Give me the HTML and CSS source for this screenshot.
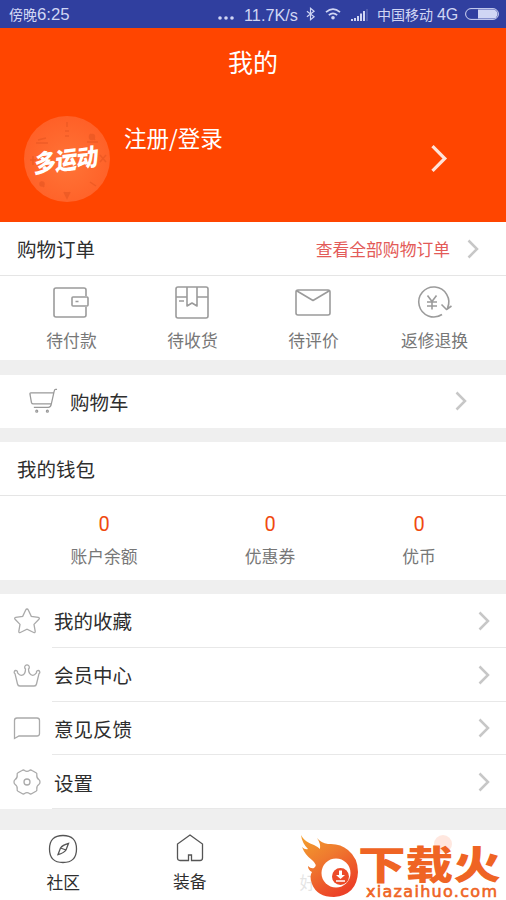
FILE: index.html
```html
<!DOCTYPE html>
<html lang="zh-CN">
<head>
<meta charset="utf-8">
<title>我的</title>
<link rel="stylesheet" href="styles.css">
</head>
<body>
<svg class="defs" width="0" height="0">
  <symbol id="chevron" viewBox="0 0 12 20"><path d="M1.5 1.5 10 10 1.5 18.5"/></symbol>
</svg>

<div class="status">
  <span class="time">傍晚<span class="latin">6:25</span></span>
  <svg class="dots" viewBox="0 0 16 4"><circle cx="2" cy="2" r="1.8"/><circle cx="8" cy="2" r="1.8"/><circle cx="14" cy="2" r="1.8"/></svg>
  <span class="speed">11.7K/s</span>
  <svg class="bt" viewBox="0 0 10 14"><path d="M1 4l8 6-4 3.3V.7L9 4l-8 6"/></svg>
  <svg class="wifi" viewBox="0 0 14 12"><path d="M0 4.200Q7-2 14 4.200M2.800 7.200q4.200-3.600 8.400 0"/><circle cx="7" cy="9.800" r="1.800"/></svg>
  <svg class="signal" viewBox="0 0 17 12"><path d="M1 12v-2M4 12V9M7 12V7M10 12V4.500M13 12V2"/><path class="dim" d="M16 12V0"/></svg>
  <span class="carrier">中国移动 <span class="latin">4G</span></span>
  <svg class="battery" viewBox="0 0 34 12"><rect class="shell" x=".6" y=".6" width="32.800" height="10.800" rx="5.400"/><path d="M13 1.500h15a4.500 4.500 0 0 1 0 9H13z"/></svg>
</div>

<header class="hero">
  <h1>我的</h1>
  <div class="profile">
    <div class="avatar">
      <svg viewBox="0 0 86 86">
        <g class="motif">
          <path d="M14 24l8-2M12 27h12M66 18l5 6m-8 2h11M43 6v5m-2 4h4m-4 5h4M6 44h6m-3-4v9M76 39l6 7m-6 0 6-7M17 66l3 5m46-5 6 4M40 76l3 6 3-6"/>
          <circle cx="18" cy="68" r="2"/><circle cx="68" cy="21" r="2.500"/>
        </g>
      </svg>
      <span>多运动</span>
    </div>
    <span class="login">注册/登录</span>
    <svg class="chev big"><use href="#chevron"/></svg>
  </div>
</header>

<section class="panel orders">
  <div class="title"><h2>购物订单</h2><span class="all">查看全部购物订单</span><svg class="chev"><use href="#chevron"/></svg></div>
  <div class="grid">
    <div class="cell"><svg viewBox="0 0 36 34"><path d="M33 11V5q0-2-2-2H3Q1 3 1 5v25q0 2 2 2h28q2 0 2-2v-8M20 12h14q1 0 1 1v7q0 1-1 1H20q-1 0-1-1v-7q0-1 1-1zM22.500 16.500h3"/></svg><span>待付款</span></div>
    <div class="cell"><svg viewBox="0 0 36 34"><path d="M4 2h28q2 0 2 2v27q0 2-2 2H4q-2 0-2-2V4q0-2 2-2zM2 12h11m10 0h11M13 2v19l5-3 5 3V2M5 16h5"/></svg><span>待收货</span></div>
    <div class="cell"><svg viewBox="0 0 36 34"><path d="M3 5h30q2 0 2 2v21q0 2-2 2H3q-2 0-2-2V7q0-2 2-2zM2 6l16 9.500L34 6"/></svg><span>待评价</span></div>
    <div class="cell"><svg viewBox="0 0 36 34"><path d="M26 29.500A15 15 0 1 1 31.500 23M25.500 19.500l5 5 5-3.500M11.500 10.500l4.500 6 4.500-6M11 17h10M11 21h10M16 17v7.500"/></svg><span>返修退换</span></div>
  </div>
</section>

<section class="panel cart">
  <svg class="cart-icon" viewBox="0 0 30 26"><path d="M29 1h-1.500q-1 0-1.500 2l-3 13.500q-.5 3-3 3H5M25.500 4.500H2Q.8 4.500 1 6l1.500 8.500Q3 16 4.500 16H23"/><circle cx="8" cy="23.500" r="1"/><circle cx="19" cy="23.500" r="1"/></svg>
  <h2>购物车</h2>
  <svg class="chev"><use href="#chevron"/></svg>
</section>

<section class="panel wallet">
  <div class="title"><h2>我的钱包</h2></div>
  <div class="balances">
    <div><b>0</b><span>账户余额</span></div>
    <div><b>0</b><span>优惠券</span></div>
    <div><b>0</b><span>优币</span></div>
  </div>
</section>

<section class="panel menu">
  <div class="row"><svg class="icon" viewBox="0 0 28 28"><path d="M14 2q.8 0 1.300 1l3 6.300 7 1.100q1.800.4.600 1.900l-4.900 5.100 1.200 7q.1 1.800-1.500 1.100L14 22.200l-6.700 3.300q-1.600.7-1.500-1.100l1.200-7-4.900-5.100q-1.200-1.500.6-1.900l7-1.100 3-6.300q.5-1 1.300-1z"/></svg><h2>我的收藏</h2><svg class="chev"><use href="#chevron"/></svg></div>
  <div class="row"><svg class="icon" viewBox="0 0 28 28"><path d="M12.500 8a2.300 2.300 0 1 1 3 0c0 3.500 1.500 6.300 4.300 6.300 2 0 2.700-1.300 3.700-2.600a1.700 1.700 0 1 1 2.500 1L23.500 23q-.4 2-2.300 2H6.800q-1.900 0-2.300-2L2 12.700a1.700 1.700 0 1 1 2.500-1c1 1.300 1.700 2.600 3.700 2.600 2.800 0 4.300-2.800 4.300-6.300z"/></svg><h2>会员中心</h2><svg class="chev"><use href="#chevron"/></svg></div>
  <div class="row"><svg class="icon" viewBox="0 0 28 28"><path d="M4 4h20q2.500 0 2.500 2.500v13Q26.500 22 24 22H6l-4.500 2.500v-18Q1.500 4 4 4z"/></svg><h2>意见反馈</h2><svg class="chev"><use href="#chevron"/></svg></div>
  <div class="row"><svg class="icon" viewBox="0 0 28 28"><path d="M9 2.500q1.500-1 2.500 0 2.500 1.600 5 0 1-1 2.500 0l4 2.300q1.300.8.800 2.200-.3 3 2 4.500 1.200.8 1.200 2.500t-1.200 2.500q-2.300 1.500-2 4.500.5 1.400-.8 2.200l-4 2.300q-1.500 1-2.500 0-2.500-1.600-5 0-1 1-2.500 0l-4-2.300q-1.300-.8-.8-2.200.3-3-2-4.500Q1 15.700 1 14t1.200-2.500q2.300-1.500 2-4.500-.5-1.400.8-2.200z"/><circle cx="14" cy="14" r="3"/></svg><h2>设置</h2><svg class="chev"><use href="#chevron"/></svg></div>
</section>

<nav class="tabs">
  <div class="tab"><svg viewBox="0 0 30 30"><path d="M15 1.500c9 0 13.500 4.500 13.500 13.500S24 28.500 15 28.500 1.500 24 1.500 15 6 1.500 15 1.500zM20.500 9.500q-6 1.500-8 4.500l-2.500 6.500q6-1.500 8-4.500zM12.500 14l5.500 2"/></svg><span>社区</span></div>
  <div class="tab home"><svg viewBox="0 0 30 30"><path d="M15 2 27.500 11v14q0 2.500-2.500 2.500h-8.500V22h-3v5.500H5q-2.500 0-2.500-2.500V11z"/></svg><span>装备</span></div>
  <div class="tab faded"><svg></svg><span>好友</span></div>
  <div class="tab faded person"><svg viewBox="0 0 30 30"><circle cx="15" cy="10" r="9"/></svg></div>
  <div class="watermark">
    <svg class="flame" viewBox="0 0 60 64">
      <defs><linearGradient id="fire" x1="0" y1="0" x2=".6" y2="1"><stop offset="0" stop-color="#f3a02c"/><stop offset=".45" stop-color="#ef7a2f"/><stop offset="1" stop-color="#ec4127"/></linearGradient></defs>
      <path class="burn" d="M1 1C4 7 9 9 14 11q4 2 6 4 1-5-3-11 4 5 11 6 12-1 20 6 10 8 10 22-1 23-24 25Q17 63 12 50q-3-8 0-12-4-2-4-6 3 3 6 2 4-3-2-8Q5 21 2 13q3 3 6 2Q2 9 1 1z"/>
      <circle class="hole" cx="36" cy="39" r="14.500"/>
      <circle class="badge" cx="40.500" cy="42.500" r="8.500"/>
      <path class="hole" d="M39 36.500h3V41h3l-4.500 4-4.500-4h3zM36 46.200h9v1.600h-9z"/>
    </svg>
    <span class="brand">下载火</span>
    <span class="domain">xiazaihuo.com</span>
  </div>
</nav>
</body>
</html>
```
FILE: styles.css
```css
* { box-sizing: border-box; }
body { margin: 0; width: 506px; height: 900px; overflow: hidden; background: #efefef; color: #2e2e2e; font-family: "Noto Sans CJK SC", sans-serif; font-size: 16.800px; }
h1, h2 { margin: 0; font-weight: 400; }
svg { display: block; flex: none; fill: none; overflow: visible; }
.defs { position: absolute; }

.status { height: 28px; padding: 0 7px 0 9px; background: #303f9f; color: #d0d6f4; display: flex; align-items: center; font: 400 14px/28px "Liberation Sans", "Noto Sans CJK SC", sans-serif; white-space: nowrap; }
.time .latin { font-size: 16.800px; }
.carrier .latin { font-size: 16px; }
.time, .carrier, .speed { padding-top: 1px; }
.status svg { fill: #d0d6f4; }
.dots { width: 16px; height: 4px; margin: 8px 10px 0 auto; }
.speed { width: 54px; font-size: 16.300px; }
.status .bt { width: 9px; height: 14px; margin-left: 8px; fill: none; stroke: #d0d6f4; stroke-width: 1.300; }
.wifi { width: 14px; height: 12px; margin-left: 11px; }
.wifi path { fill: none; stroke: #d0d6f4; stroke-width: 1.700; }
.signal { width: 17px; height: 12px; margin: 2px 0 0 11px; stroke: #d0d6f4; stroke-width: 2; }
.signal .dim { stroke: #4f5db0; }
.carrier { width: 82px; margin-left: 9px; }
.battery { width: 34px; height: 12px; margin-left: 6px; }
.battery .shell { fill: none; stroke: #d0d6f4; }

.hero { height: 194px; background: #ff4500; color: #fff; }
.hero h1 { height: 70px; line-height: 67px; text-align: center; font-size: 25px; }
.profile { display: flex; height: 124px; padding: 18px 58px 0 24px; }
.avatar { position: relative; width: 86px; height: 86px; border-radius: 50%; background: radial-gradient(circle at 50% 55%, #ff7437, #ff6128 70%, #ff5b20); }
.avatar svg { width: 86px; height: 86px; }
.motif { stroke: #d94d1c; fill: #d94d1c; stroke-width: 1.500; opacity: .4; }
.avatar span { position: absolute; left: 10px; top: 25px; font-size: 22px; font-weight: 900; line-height: 34px; letter-spacing: -.5px; white-space: nowrap; transform: rotate(-7deg) skewX(-10deg) scaleY(1.100); }
.login { margin-left: 14px; font-size: 22.500px; line-height: 42px; }
.chev { width: 12px; height: 20px; margin-left: auto; stroke: #c7c7c7; stroke-width: 2.500; }
.chev.big { width: 18px; height: 29px; margin-top: 28px; stroke: #ffe3d8; stroke-width: 2.200; }

.panel { background: #fff; }
.panel h2 { font-size: 19.500px; }
.title { height: 54px; border-bottom: 1px solid #e5e5e5; padding: 0 27px 0 17px; display: flex; align-items: center; }
.orders { height: 138px; }
.all { margin-left: auto; color: #e35b58; }
.title .chev { margin-left: 17px; }
.grid { display: grid; grid-template-columns: repeat(4, 121px); padding: 9px 0 0 11px; }
.cell { display: flex; flex-direction: column; align-items: center; }
.cell svg { width: 36px; height: 34px; margin-left: -1px; stroke: #9b9b9b; stroke-width: 1.600; stroke-linejoin: round; }
.cell span { margin-top: 9px; line-height: 24px; color: #777; }

.cart { margin-top: 15px; height: 53px; padding: 0 39px 1px 29px; display: flex; align-items: center; }
.cart-icon { width: 29px; height: 26px; margin-right: 12px; stroke: #999; stroke-width: 1.300; }

.wallet { margin-top: 14px; height: 138px; }
.balances { display: grid; grid-template-columns: 208px 124px 174px; text-align: center; padding-top: 14px; }
.balances b { display: block; color: #f04a10; font: 400 20px/28px Roboto, sans-serif; }
.balances span { display: block; line-height: 36px; color: #777; }

.menu { margin-top: 14px; height: 215px; }
.row { height: 53.750px; display: flex; align-items: center; padding: 0 16px 0 13px; background: linear-gradient(#e8e8e8, #e8e8e8) 52px 100% / 100% 1px no-repeat; }
.icon { width: 28px; height: 28px; margin-right: 13px; stroke: #aaa; stroke-width: 1.300; }

.tabs { position: relative; margin-top: 21px; height: 70px; background: #fff; display: grid; grid-template-columns: repeat(4, 126.500px); }
.tab { display: flex; flex-direction: column; align-items: center; padding-top: 4px; }
.tab svg { width: 30px; height: 30px; stroke: #555; stroke-width: 1.300; }
.tab span { margin-top: 6px; line-height: 24px; }
.tab.home { padding-top: 3px; }
.faded { opacity: .12; }
.faded.person svg { fill: #ff4500; stroke: none; }
.watermark { position: absolute; left: 300px; top: 4px; width: 206px; height: 66px; color: #ef6424; }
.flame { width: 60px; height: 64px; }
.burn { fill: url(#fire); }
.badge { fill: #ec4a28; }
.hole { fill: #fff; }
.brand { position: absolute; left: 58px; top: 8px; font-size: 39px; line-height: 40px; font-weight: 900; white-space: nowrap; transform: scaleX(1.220); transform-origin: 0 0; }
.domain { position: absolute; left: 66px; top: 50px; font: 400 16px/16px "DejaVu Sans", sans-serif; letter-spacing: 1.300px; white-space: nowrap; -webkit-text-stroke: .6px #ef6424; }
```
